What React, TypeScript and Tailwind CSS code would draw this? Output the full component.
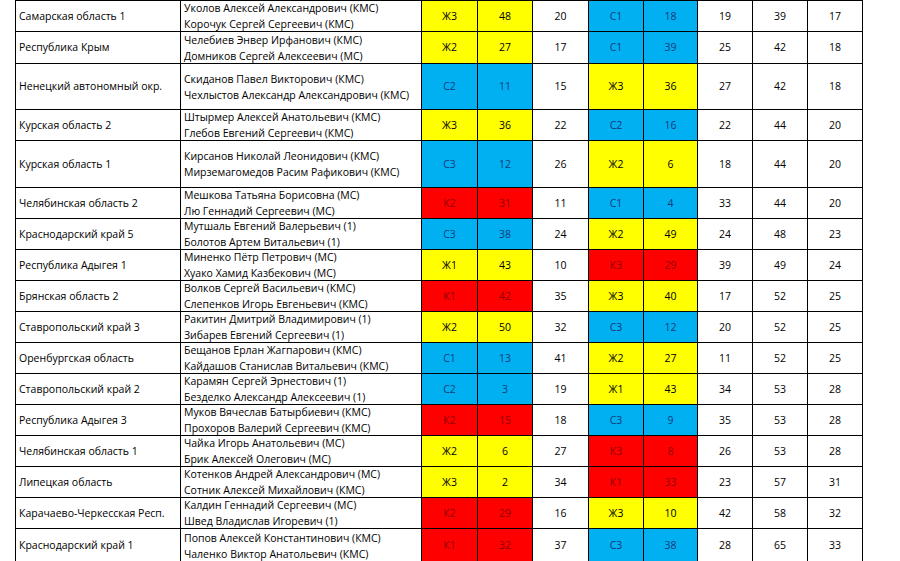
type Cell = { label: string; value: number; color: "y" | "b" | "r" };

type Row = {
  region: string;
  names: [string, string];
  first: Cell;
  a: number;
  second: Cell;
  b: number;
  c: number;
  d: number;
  h: string;
};

const y = (label: string, value: number): Cell => ({ label, value, color: "y" });
const b = (label: string, value: number): Cell => ({ label, value, color: "b" });
const r = (label: string, value: number): Cell => ({ label, value, color: "r" });

const rows: Row[] = [
  { region: "Самарская область 1", names: ["Уколов Алексей Александрович (КМС)", "Корочук Сергей Сергеевич (КМС)"], first: y("Ж3", 48), a: 20, second: b("С1", 18), b: 19, c: 39, d: 17, h: "h-[31px]" },
  { region: "Республика Крым", names: ["Челебиев Энвер Ирфанович (КМС)", "Домников Сергей Алексеевич (МС)"], first: y("Ж2", 27), a: 17, second: b("С1", 39), b: 25, c: 42, d: 18, h: "h-[32px]" },
  { region: "Ненецкий автономный окр.", names: ["Скиданов Павел Викторович (КМС)", "Чехлыстов Александр Александрович (КМС)"], first: b("С2", 11), a: 15, second: y("Ж3", 36), b: 27, c: 42, d: 18, h: "h-[46px]" },
  { region: "Курская область 2", names: ["Штырмер Алексей Анатольевич (КМС)", "Глебов Евгений Сергеевич (КМС)"], first: y("Ж3", 36), a: 22, second: b("С2", 16), b: 22, c: 44, d: 20, h: "h-[31px]" },
  { region: "Курская область 1", names: ["Кирсанов Николай Леонидович (КМС)", "Мирземагомедов Расим Рафикович (КМС)"], first: b("С3", 12), a: 26, second: y("Ж2", 6), b: 18, c: 44, d: 20, h: "h-[47px]" },
  { region: "Челябинская область 2", names: ["Мешкова Татьяна Борисовна (МС)", "Лю Геннадий Сергеевич (МС)"], first: r("К2", 31), a: 11, second: b("С1", 4), b: 33, c: 44, d: 20, h: "h-[31px]" },
  { region: "Краснодарский край 5", names: ["Мутшаль Евгений Валерьевич (1)", "Болотов Артем Витальевич (1)"], first: b("С3", 38), a: 24, second: y("Ж2", 49), b: 24, c: 48, d: 23, h: "h-[31px]" },
  { region: "Республика Адыгея 1", names: ["Миненко Пётр Петрович (МС)", "Хуако Хамид Казбекович (МС)"], first: y("Ж1", 43), a: 10, second: r("К3", 29), b: 39, c: 49, d: 24, h: "h-[31px]" },
  { region: "Брянская область 2", names: ["Волков Сергей Васильевич (КМС)", "Слепенков Игорь Евгеньевич (КМС)"], first: r("К1", 42), a: 35, second: y("Ж3", 40), b: 17, c: 52, d: 25, h: "h-[31px]" },
  { region: "Ставропольский край 3", names: ["Ракитин Дмитрий Владимирович (1)", "Зибарев Евгений Сергеевич (1)"], first: y("Ж2", 50), a: 32, second: b("С3", 12), b: 20, c: 52, d: 25, h: "h-[31px]" },
  { region: "Оренбургская область", names: ["Бещанов Ерлан Жагпарович (КМС)", "Кайдашов Станислав Витальевич (КМС)"], first: b("С1", 13), a: 41, second: y("Ж2", 27), b: 11, c: 52, d: 25, h: "h-[31px]" },
  { region: "Ставропольский край 2", names: ["Карамян Сергей Эрнестович (1)", "Безделко Александр Алексеевич (1)"], first: b("С2", 3), a: 19, second: y("Ж1", 43), b: 34, c: 53, d: 28, h: "h-[31px]" },
  { region: "Республика Адыгея 3", names: ["Муков Вячеслав Батырбиевич (КМС)", "Прохоров Валерий Сергеевич (КМС)"], first: r("К2", 15), a: 18, second: b("С3", 9), b: 35, c: 53, d: 28, h: "h-[31px]" },
  { region: "Челябинская область 1", names: ["Чайка Игорь Анатольевич (МС)", "Брик Алексей Олегович (МС)"], first: y("Ж2", 6), a: 27, second: r("К3", 8), b: 26, c: 53, d: 28, h: "h-[31px]" },
  { region: "Липецкая область", names: ["Котенков Андрей Александрович (МС)", "Сотник Алексей Михайлович (КМС)"], first: y("Ж3", 2), a: 34, second: r("К1", 33), b: 23, c: 57, d: 31, h: "h-[31px]" },
  { region: "Карачаево-Черкесская Респ.", names: ["Калдин Геннадий Сергеевич (МС)", "Швед Владислав Игоревич (1)"], first: r("К2", 29), a: 16, second: y("Ж3", 10), b: 42, c: 58, d: 32, h: "h-[31px]" },
  { region: "Краснодарский край 1", names: ["Попов Алексей Константинович (КМС)", "Чаленко Виктор Анатольевич (КМС)"], first: r("К1", 32), a: 37, second: b("С3", 38), b: 28, c: 65, d: 33, h: "h-[34px]" },
];

const fill = {
  y: "bg-[#ffff00] text-black",
  b: "bg-[#00b0f0] text-[#17397a]",
  r: "bg-[#ff0000] text-[#8f0000]",
};

const td = "border border-black p-0";

function Colored({ cell }: { cell: Cell }) {
  return (
    <>
      <td className={`${td} text-center ${fill[cell.color]}`}>{cell.label}</td>
      <td className={`${td} text-center ${fill[cell.color]}`}>{cell.value}</td>
    </>
  );
}

export default function App() {
  return (
    <div className="h-[561px] w-[900px] overflow-hidden bg-white font-['Open_Sans',sans-serif] text-[10.5px] text-black">
      <table className="ml-[15px] table-fixed border-collapse">
        <colgroup>
          <col className="w-[165px]" />
          <col className="w-[241px]" />
          <col className="w-[56px]" />
          <col className="w-[55px]" />
          <col className="w-[56px]" />
          <col className="w-[55px]" />
          <col className="w-[54px]" />
          <col className="w-[55px]" />
          <col className="w-[55px]" />
          <col className="w-[55px]" />
        </colgroup>
        <tbody>
          {rows.map((row) => (
            <tr key={row.region} className={`${row.h} leading-[15px]`}>
              <td className={`${td} pl-[3px]`}>{row.region}</td>
              <td className={`${td} pl-[3px]`}>
                {/* две строки по 16px, чуть выходят за 30px ячейки, как в оригинале */}
                <div className="flex h-[30px] flex-col justify-center leading-[16px]">
                  <div>{row.names[0]}</div>
                  <div>{row.names[1]}</div>
                </div>
              </td>
              <Colored cell={row.first} />
              <td className={`${td} text-center`}>{row.a}</td>
              <Colored cell={row.second} />
              <td className={`${td} text-center`}>{row.b}</td>
              <td className={`${td} text-center`}>{row.c}</td>
              <td className={`${td} text-center`}>{row.d}</td>
            </tr>
          ))}
        </tbody>
      </table>
    </div>
  );
}
